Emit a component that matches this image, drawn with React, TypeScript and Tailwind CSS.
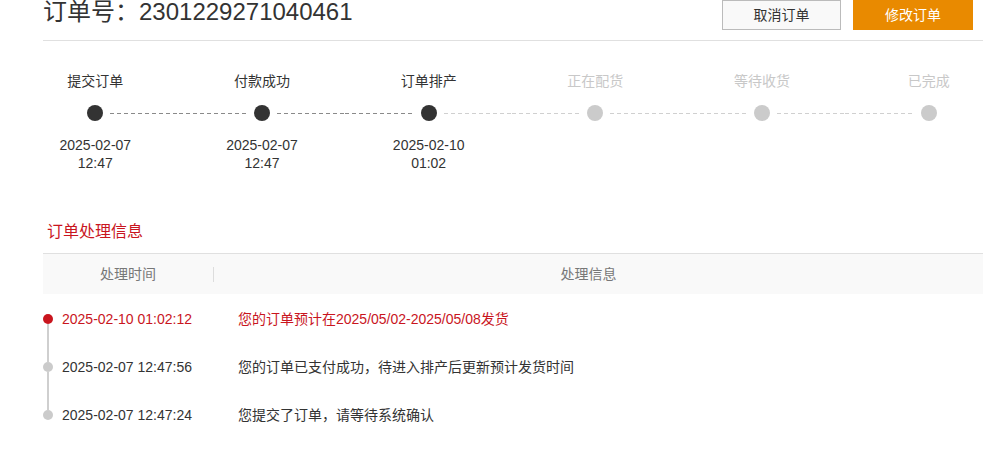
import React from 'react'

const steps = [
  { label: '提交订单', date: '2025-02-07', time: '12:47', done: true },
  { label: '付款成功', date: '2025-02-07', time: '12:47', done: true },
  { label: '订单排产', date: '2025-02-10', time: '01:02', done: true },
  { label: '正在配货', done: false },
  { label: '等待收货', done: false },
  { label: '已完成', done: false },
]

const logs = [
  { time: '2025-02-10 01:02:12', text: '您的订单预计在2025/05/02-2025/05/08发货', active: true },
  { time: '2025-02-07 12:47:56', text: '您的订单已支付成功，待进入排产后更新预计发货时间', active: false },
  { time: '2025-02-07 12:47:24', text: '您提交了订单，请等待系统确认', active: false },
]

const darkDash = 'bg-[linear-gradient(to_right,#8a8a8a_4px,transparent_4px)] bg-[length:7px_1px]'
const lightDash = 'bg-[linear-gradient(to_right,#d0d0d0_4px,transparent_4px)] bg-[length:7px_1px]'

function StepItem({ step, index }: { step: (typeof steps)[number]; index: number }) {
  const prev = steps[index - 1]
  const next = steps[index + 1]
  // a segment is dark only when both ends are done
  const leftDark = prev && prev.done && step.done
  const rightDark = next && next.done && step.done

  return (
    <div className="flex flex-col items-center">
      <div className={`h-[18px] text-[14px] leading-[18px] ${step.done ? 'text-[#333]' : 'text-[#c8c8c8]'}`}>
        {step.label}
      </div>
      <div className="mt-[15px] flex h-[16px] w-full items-center">
        <div className={`mr-[7px] h-px flex-1 bg-repeat-x ${!prev ? '' : leftDark ? darkDash : lightDash}`} />
        <div className={`h-[16px] w-[16px] rounded-full ${step.done ? 'bg-[#333]' : 'bg-[#cbcbcb]'}`} />
        <div className={`ml-[7px] h-px flex-1 bg-repeat-x ${!next ? '' : rightDark ? darkDash : lightDash}`} />
      </div>
      <div className="mt-[15px] h-[36px] text-center text-[14px] leading-[18px] text-[#333]">
        {step.date && (
          <>
            <div>{step.date}</div>
            <div>{step.time}</div>
          </>
        )}
      </div>
    </div>
  )
}

export default function App() {
  return (
    <div
      className="h-[453px] w-[1003px] overflow-hidden bg-white text-[#333]"
      style={{ fontFamily: '"Liberation Sans", "Noto Sans CJK SC", Arial, sans-serif' }}
    >
      {/* Header */}
      <div className="ml-[43px] flex h-[41px] w-[940px] items-start justify-between border-b border-[#e0e0e0]">
        <h1 className="text-[24px] font-normal leading-[24px] text-[#333]">订单号：2301229271040461</h1>
        <div className="mr-[10px] flex gap-[12px]">
          <button className="h-[30px] w-[119px] border border-[#bbb] bg-[#f9f9f9] text-[14px] text-[#333]">
            取消订单
          </button>
          <button className="h-[30px] w-[120px] bg-[#e98a00] text-[14px] text-white">修改订单</button>
        </div>
      </div>

      {/* Progress steps */}
      <div className="ml-[12px] mt-[31px] grid w-[1000px] grid-cols-6">
        {steps.map((s, i) => (
          <StepItem key={s.label} step={s} index={i} />
        ))}
      </div>

      {/* Processing info */}
      <div className="ml-[43px] w-[940px]">
        <h2 className="mt-[51px] pl-[4px] text-[16px] font-normal leading-[18px] text-[#c9151e]">订单处理信息</h2>
        <div className="mt-[12px] flex h-[41px] items-center border-t border-[#e0e0e0] bg-[#f9f9f9] text-[14px] text-[#777]">
          <div className="flex w-[170px] justify-center">处理时间</div>
          <div className="h-[15px] w-px bg-[#ddd]" />
          <div className="flex flex-1 justify-center pr-[20px]">处理信息</div>
        </div>

        <div className="pt-px">
          {logs.map((log, i) => (
            <div key={log.time} className="flex h-[48px] items-stretch text-[14px]">
              <div className="flex w-[10px] flex-col items-center">
                <div className={`w-[2px] flex-1 ${i === 0 ? 'bg-transparent' : 'bg-[#cfcfcf]'}`} />
                <div className={`h-[10px] w-[10px] rounded-full ${log.active ? 'bg-[#c9151e]' : 'bg-[#cbcbcb]'}`} />
                <div className={`w-[2px] flex-1 ${i === logs.length - 1 ? 'bg-transparent' : 'bg-[#cfcfcf]'}`} />
              </div>
              <div className={`ml-[9px] flex w-[176px] items-center ${log.active ? 'text-[#c9151e]' : 'text-[#333]'}`}>
                {log.time}
              </div>
              <div className={`flex items-center ${log.active ? 'text-[#c9151e]' : 'text-[#333]'}`}>{log.text}</div>
            </div>
          ))}
        </div>
      </div>
    </div>
  )
}
